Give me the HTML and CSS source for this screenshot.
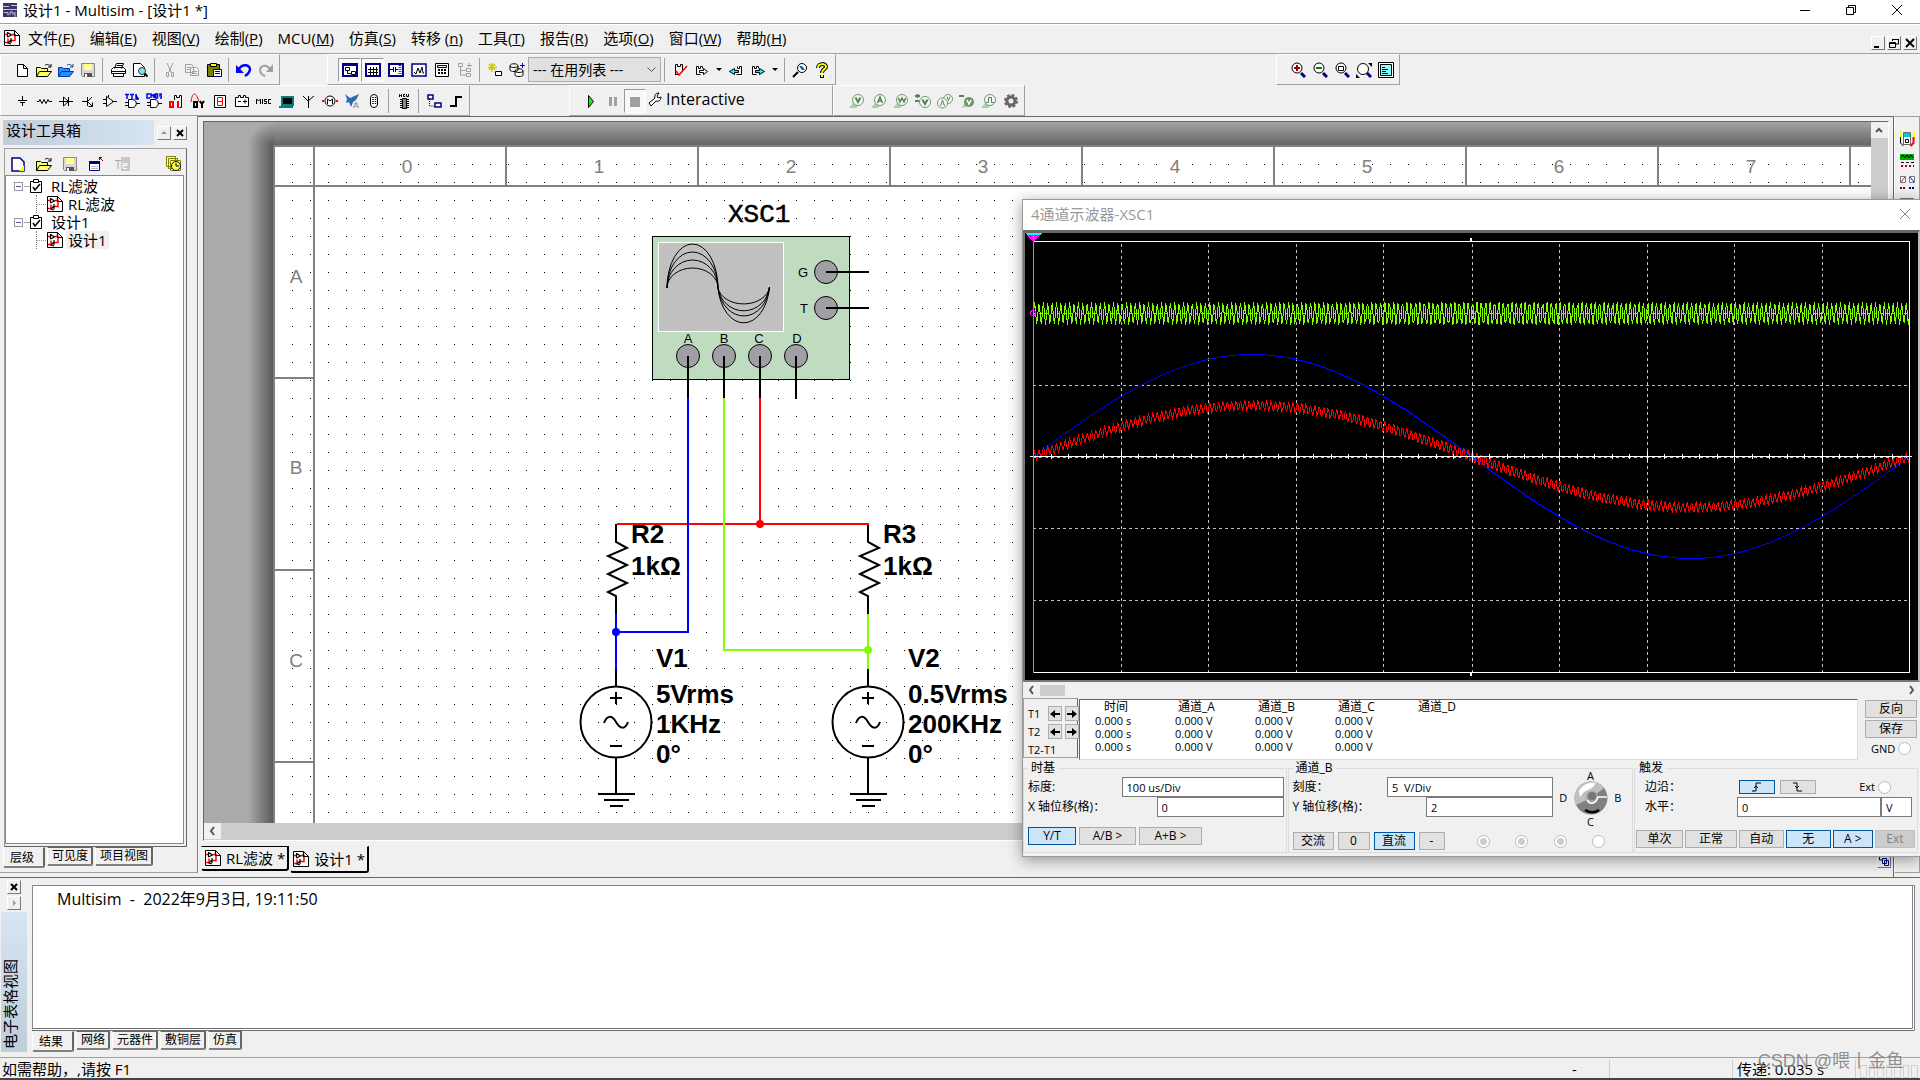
FILE: index.html
```html
<!DOCTYPE html>
<html lang="zh-CN">
<head>
    <meta charset="UTF-8">
    <meta name="viewport" content="width=device-width, initial-scale=1.0">
    <title>设计1 - Multisim - [设计1 *]</title>
    <link rel="stylesheet" href="styles.css">
</head>
<body>
    <svg class="sprite" aria-hidden="true">
        <symbol id="i-app" viewBox="0 0 16 16"><path fill="#3a3468" d="M1 1h14v14H1z"/><path stroke="#c8c4e8" fill="none" d="M1 4.5h6M9 3.5h6M1 7.5h14M2 10.5h4v3M8 13v-3h3v3M13 10v5"/></symbol>
        <symbol id="i-doc" viewBox="0 0 16 16"><path fill="#fff" stroke="#000" d="M.5.5h10l5 5v10H.5z"/><path fill="none" stroke="#f00" stroke-width="1.5" d="M1 4.5h2M1 12.5h3v-4M8 4.5h3v6H7"/><path fill="none" stroke="#000" stroke-width="1.2" d="M10.5.5v5h5M3.500 2v5M3.500 2.500l4 2.500-4 2M7 8v5M7 10l-3 3 3 1"/></symbol>
        <symbol id="i-new" viewBox="0 0 16 16"><path fill="#fff" stroke="#000" d="M3.5 2.5h6l4 4v8h-10zM9.5 2.5v4h4"/></symbol>
        <symbol id="i-open" viewBox="0 0 16 16"><path fill="#ff6" stroke="#000" d="M.5 14.5v-9h4l1 1h6v3M.5 14.5l3-5h12l-4 5z"/><path fill="none" stroke="#000" d="M9 3.5c2-2 4-1 5.5 1M15 2v3h-3"/></symbol>
        <symbol id="i-sample" viewBox="0 0 16 16"><path fill="#2a8cff" stroke="#003a9c" d="M.5 14.5v-9h4l1 1h6v3M.5 14.5l3-5h12l-4 5z"/><path fill="none" stroke="#003a9c" d="M9 3.5c2-2 4-1 5.5 1M15 2v3h-3"/></symbol>
        <symbol id="i-save" viewBox="0 0 16 16"><path fill="#d8d8d8" stroke="#888" d="M1.5 1.5h13v13h-12l-1-1z"/><path fill="#ffff8c" d="M4 2h8v6H4z"/><path fill="#555" d="M4 11h8v4H4z"/><path fill="#fff" d="M5 12h2v3H5z"/></symbol>
        <symbol id="i-print" viewBox="0 0 16 16"><path fill="#fff" stroke="#000" d="M4.5 6.5l2-5h7l-2 5M1.5 7.5l2-2h10l2 2v4h-14zM3.5 11.5h10v3h-10z"/><path stroke="#000" d="M2 9.5h13M7 3.5h5"/></symbol>
        <symbol id="i-preview" viewBox="0 0 16 16"><path fill="#fff" stroke="#000" d="M1.5 1.5h7l4 4v9h-11z"/><circle cx="10" cy="9" r="3.5" fill="#7fe6e6" stroke="#333"/><path stroke="#000" stroke-width="2" d="M12.5 11.5l3 3"/></symbol>
        <symbol id="i-cut" viewBox="0 0 16 16"><path fill="none" stroke="#a0a0a0" d="M5 1l4 9M11 1L7 10M4.5 10.5h2v4h-2zM9.5 10.5h2v4h-2z"/></symbol>
        <symbol id="i-copy" viewBox="0 0 16 16"><path fill="#f0f0f0" stroke="#a0a0a0" d="M1.5 2.5h6l2 2v6h-8zM6.5 5.5h6l2 2v6h-8zM8 9.5h5M8 11.5h5M3 5.5h3M3 7.5h3"/></symbol>
        <symbol id="i-paste" viewBox="0 0 16 16"><path fill="#808000" stroke="#000" d="M1.5 2.5h12v12h-12z"/><path fill="#ff0" stroke="#000" d="M4.5 1.5h6v3h-6z"/><path fill="#fff" stroke="#000080" d="M7.5 7.5h8v7h-8zM9 9.5h5M9 11.5h5"/></symbol>
        <symbol id="i-undo" viewBox="0 0 16 16"><path fill="none" stroke="#00f" stroke-width="2.5" d="M3 7c3-5 10-5 11 0 0 3-2 5-5 7"/><path fill="#00f" d="M0 3v8h8z"/></symbol>
        <symbol id="i-redo" viewBox="0 0 16 16"><path fill="none" stroke="#a0a0a0" stroke-width="2" d="M12 7C9 2 3 3 2 8c0 3 2 5 5 6"/><path fill="#a0a0a0" d="M15 2v8H8z"/></symbol>
        <symbol id="i-toolbox" viewBox="0 0 16 16"><path fill="#fff" stroke="#000080" stroke-width="2" d="M1 2h14v12H1z"/><path fill="#000080" d="M1 1h14v3H1z"/><path fill="none" stroke="#000" d="M3.5 5.5h4v3h-4zM5.5 8.5v3h4M9.5 9.5h4v3h-4z"/></symbol>
        <symbol id="i-grid" viewBox="0 0 16 16"><path fill="#fff" stroke="#000080" stroke-width="2" d="M1 2h14v12H1z"/><path stroke="#000" d="M3 7.5h10M3 10.5h10M5.5 5v8M8.5 5v8M11.5 5v8"/></symbol>
        <symbol id="i-parts" viewBox="0 0 16 16"><path fill="#fff" stroke="#000080" stroke-width="2" d="M1 2h14v12H1z"/><path stroke="#000" d="M2 7.5h3M5.5 5v5M7.5 5v5M8 7.5h2"/><path stroke="#f00" stroke-width="3" stroke-dasharray="1 1" d="M12 3v10"/></symbol>
        <symbol id="i-graph" viewBox="0 0 16 16"><path fill="#fff" stroke="#000080" stroke-width="1.5" d="M1 2h14v12H1z"/><path fill="none" stroke="#000" d="M3 10l2 2 2-6 2 5 2-6 1 6h1"/></symbol>
        <symbol id="i-calc" viewBox="0 0 16 16"><path fill="#fff" stroke="#000" d="M1.5 1.5h13v13h-13zM3.5 3.5h9v2h-9z"/><path stroke="#000" stroke-width="2" stroke-dasharray="2 1" d="M4 8h8M4 11h8"/></symbol>
        <symbol id="i-tree" viewBox="0 0 16 16"><path fill="none" stroke="#a0a0a0" d="M1.5 1.5h4v3h-4zM9.5 6.5h4v3h-4zM9.5 11.5h4v3h-4zM3.5 5v8h6M3.5 8.5h6M12 1v4M10 3.5h5"/></symbol>
        <symbol id="i-create" viewBox="0 0 16 16"><path stroke="#cc0" stroke-width="1.5" d="M5 1v9M1 5.5h9M2 2l6 6M8 2L2 8"/><path fill="#fff" stroke="#000" d="M8.5 9.5h6v4h-6z"/></symbol>
        <symbol id="i-db" viewBox="0 0 16 16"><path fill="#fff" stroke="#000" d="M1 4c0-3 8-3 8 0v4c0 2-8 2-8 0zM6 9c0-3 8-3 8 0v4c0 2-8 2-8 0zM1 4c0 2 8 2 8 0M6 9c0 2 8 2 8 0"/><path stroke="#00a" d="M13.5 1v5M11 3.5h5"/></symbol>
        <symbol id="i-erc" viewBox="0 0 16 16"><path fill="none" stroke="#000" d="M3.5 12.5v-10h2v2h3v-2h2v7M3 12.5h3"/><path fill="none" stroke="#f00" stroke-width="1.5" d="M4 9l3 4 8-9"/></symbol>
        <symbol id="i-fwd" viewBox="0 0 16 16"><path fill="#fff" stroke="#000" d="M2.5 12.5v-8h2v2h2v-2h2v2M5.5 8.5h4v-2l4 3-4 3v-2h-4zM2.5 12.5h4"/></symbol>
        <symbol id="i-back" viewBox="0 0 16 16"><path fill="#fff" stroke="#000" d="M8.5 12.5h5v-8h-2v2h-2v-2"/><path fill="#0ff" stroke="#000" d="M10.5 8.5h-4v-2l-5 3 5 3v-2h4z"/></symbol>
        <symbol id="i-fwd2" viewBox="0 0 16 16"><path fill="#fff" stroke="#000" d="M2.5 12.5v-8h2v2h2v-2h2v2M2.5 12.5h4"/><path fill="#0ff" stroke="#000" d="M5.5 8.5h4v-2l5 3-5 3v-2h-4z"/></symbol>
        <symbol id="i-find" viewBox="0 0 16 16"><circle cx="10" cy="6" r="4.5" fill="#fff" stroke="#000"/><path stroke="#000" stroke-width="2" d="M6 10l-5 5"/><path fill="#06a" d="M7 4h3l3 4h-3z"/></symbol>
        <symbol id="i-help" viewBox="0 0 16 16"><path fill="none" stroke="#000" stroke-width="4" d="M4 6c0-5 8-5 8-1 0 2-4 2-4 6M8 13v3"/><path fill="none" stroke="#ff0" stroke-width="2" d="M4 6c0-5 8-5 8-1 0 2-4 2-4 6M8 13v2"/></symbol>
        <symbol id="i-zoomin" viewBox="0 0 16 16"><circle cx="7" cy="6" r="5" fill="#fff" stroke="#000"/><path stroke="#000080" stroke-width="3" d="M11 11l4 4"/><path stroke="#a00000" stroke-width="2" d="M4 6h6M7 3v6"/></symbol>
        <symbol id="i-zoomout" viewBox="0 0 16 16"><circle cx="7" cy="6" r="5" fill="#fff" stroke="#000"/><path stroke="#000080" stroke-width="3" d="M11 11l4 4"/><path stroke="#008000" stroke-width="2" d="M4 6h6"/></symbol>
        <symbol id="i-zoomarea" viewBox="0 0 16 16"><circle cx="7" cy="6" r="5" fill="#fff" stroke="#000"/><path stroke="#000080" stroke-width="3" d="M11 11l4 4"/><path fill="none" stroke="#000" d="M4.5 4.5h5v4h-5z"/></symbol>
        <symbol id="i-zoomfit" viewBox="0 0 16 16"><circle cx="7" cy="7" r="5.5" fill="#fff" stroke="#000"/><path stroke="#000080" stroke-width="3" d="M11 11l4 4"/><path d="M12 1h4v4zM0 12v4h4z"/></symbol>
        <symbol id="i-full" viewBox="0 0 16 16"><path fill="#fff" stroke="#000" d="M.5.5h15v15H.5z"/><path fill="#8ff" stroke="#000" d="M2.5 2.5h11v11h-11z"/><path stroke="#000" d="M4 5.5h3M4 7.5h6M4 9.5h4M4 11.5h6"/></symbol>

        <symbol id="i-source" viewBox="0 0 16 16"><path stroke="#000" d="M8.5 3v4M4 7.5h9M6 9.5h5M8.5 10v3"/></symbol>
        <symbol id="i-res" viewBox="0 0 16 16"><path fill="none" stroke="#000" d="M1 8.5h2l1-2 2 4 2-4 2 4 2-4 1 2h3"/></symbol>
        <symbol id="i-diode" viewBox="0 0 16 16"><path fill="#fff" stroke="#000" d="M1 8.5h14M5.5 4v9l5-4.5zM10.5 4v9"/></symbol>
        <symbol id="i-bjt" viewBox="0 0 16 16"><path fill="none" stroke="#000" d="M2 8.5h5M7.5 4v9M8 8l4-4M8 9l4 4M12.5 9.5v4h-4"/></symbol>
        <symbol id="i-opamp" viewBox="0 0 16 16"><path fill="#fff" stroke="#000" d="M1 6.5h3M1 10.5h3M10 8.5h5M4.5 3.5v10l7-5zM6.5 2v2"/></symbol>
        <symbol id="i-ttl" viewBox="0 0 16 16"><path stroke="#00f" stroke-width="1.5" d="M1 1.5h4M3 2v4M6 1.5h4M8 2v4M12 1v5h3"/><path fill="#fff" stroke="#000" d="M4.5 6.5h4c5 0 5 8 0 8h-4zM1 9.5h3M1 12.5h3M12 10.5h4"/></symbol>
        <symbol id="i-cmos" viewBox="0 0 16 16"><path fill="none" stroke="#00f" stroke-width="1.5" d="M4 1H1v4h3M5 5V1l2 2 1-2v4M9.5 1h2v4h-2zM16 1h-2v2h2v2h-2"/><path fill="#fff" stroke="#000" d="M4.5 6.5h4c5 0 5 8 0 8h-4zM1 9.5h3M1 12.5h3M12 10.5h4"/></symbol>
        <symbol id="i-digital" viewBox="0 0 16 16"><path fill="none" stroke="#000" d="M6.5 7V2.5h2v2h3v-2h2v12h-2"/><path fill="none" stroke="#f00" stroke-width="2" d="M2 9h3v5H2zM10 8v7"/></symbol>
        <symbol id="i-mixed" viewBox="0 0 16 16"><path fill="none" stroke="#f00" d="M1 9c1-10 5-10 7-3s5 3 6 2"/><path fill="none" stroke="#000" stroke-width="2" d="M4 9h3v5H4zM10 8l2 3v4M14 8l-2 3"/></symbol>
        <symbol id="i-ind" viewBox="0 0 16 16"><path fill="#fff" stroke="#000" d="M2.5 2.5h11v12h-11z"/><path fill="none" stroke="#f00" d="M5.5 4.5h5v8h-5zM5 8.5h6"/></symbol>
        <symbol id="i-power" viewBox="0 0 16 16"><path fill="#fff" stroke="#000" d="M1.5 4.5h3v-2h2v2h3v-2h2v2h3v9h-13zM4 8.5h3M9 8.5h4M11 6.5v4"/></symbol>
        <symbol id="i-misc" viewBox="0 0 16 16"><path fill="none" stroke="#000" d="M.5 11V6l2 2 2-2v5M6.5 6v5M11 6.5H8.5v2h2v2H8M15 6.5h-2.5v4H15"/></symbol>
        <symbol id="i-periph" viewBox="0 0 16 16"><path fill="#000" stroke="#008080" stroke-width="2" d="M4 4h11v8H4z"/><path stroke="#008080" stroke-width="2" d="M1 14h14"/></symbol>
        <symbol id="i-rf" viewBox="0 0 16 16"><path fill="none" stroke="#000" d="M8.5 15V3M3 3l5 5 6-5"/></symbol>
        <symbol id="i-motor" viewBox="0 0 16 16"><path stroke="#f00" stroke-width="2" d="M0 8h2M14 8h2"/><circle cx="8" cy="8" r="5" fill="#fff" stroke="#000"/><path fill="none" stroke="#000" d="M5.5 11V6L8 8l2.5-2v5"/></symbol>
        <symbol id="i-ni" viewBox="0 0 16 16"><path fill="#2a6ab0" d="M1 1l5 4 9-4-3 6-3 2-2 5-2-5-3 1 1-4z"/><path fill="none" stroke="#888" d="M9 14h2v-4h2v4h2"/></symbol>
        <symbol id="i-conn" viewBox="0 0 16 16"><rect x="4.5" y="1.5" width="7" height="13" rx="3.5" fill="#fff" stroke="#000"/><path stroke="#000" stroke-width="1.5" stroke-dasharray="1 1" d="M7 4v8M9.5 4v8"/></symbol>
        <symbol id="i-mcu" viewBox="0 0 16 16"><path fill="none" stroke="#000" d="M3.500 4V1.500l1 1 1-1V4M9 1.500H7.500v2H9M10.500 1v2.500h2V1"/><path stroke="#000" stroke-dasharray="1 1" stroke-width="9" d="M8.500 6v9"/><path fill="#888" stroke="#000" d="M6.500 5.500h4v10h-4z"/></symbol>
        <symbol id="i-hier" viewBox="0 0 16 16"><path fill="#fff" stroke="#000080" stroke-width="1.5" d="M2 2h5v4H2zM9 10h6v4H9z"/><path fill="none" stroke="#000" stroke-dasharray="1 1" d="M3.5 6v7h5"/></symbol>
        <symbol id="i-bus" viewBox="0 0 16 16"><path fill="none" stroke="#000" stroke-width="2" d="M2 13h6V4h6"/></symbol>
        <symbol id="i-play" viewBox="0 0 16 16"><path fill="#0f0" stroke="#000" d="M5.5 2.5v12l5-6z"/></symbol>
        <symbol id="i-pause" viewBox="0 0 16 16"><path fill="#a0a0a0" d="M4 4h3v9H4zM9 4h3v9H9z"/></symbol>
        <symbol id="i-stop" viewBox="0 0 16 16"><path fill="#a0a0a0" d="M3 4h10v10H3z"/></symbol>
        <symbol id="i-wrench" viewBox="0 0 16 16"><path fill="#fff" stroke="#000" d="M2 12l6-5c-1-3 1-5 4-5l-2 3 1 2 3-1c0 3-2 5-5 4l-5 5z"/></symbol>
        <symbol id="i-probe" viewBox="0 0 16 16"><path fill="#a8cfa8" d="M0 15l5-6 4 4-2 2z"/><circle cx="9" cy="7" r="5.5" fill="#f6faf6" stroke="#6f976f"/></symbol>
        <symbol id="i-pv" viewBox="0 0 16 16"><use href="#i-probe"/><path fill="none" stroke="#557f55" stroke-width="2" d="M6.5 4.5L9 9l2.5-4.5"/></symbol>
        <symbol id="i-pa" viewBox="0 0 16 16"><use href="#i-probe"/><path fill="none" stroke="#557f55" stroke-width="1.5" d="M6.5 10L9 4l2.5 6M7 8h4"/></symbol>
        <symbol id="i-pw" viewBox="0 0 16 16"><use href="#i-probe"/><path fill="none" stroke="#557f55" stroke-width="1.5" d="M5.5 5L7 9l2-4 2 4 1.500-4"/></symbol>
        <symbol id="i-pvv" viewBox="0 0 16 16"><circle cx="10" cy="9" r="5.5" fill="#f6faf6" stroke="#6f976f"/><path fill="none" stroke="#557f55" stroke-width="2" d="M7.500 6.500L10 11l2.500-4.500M0 3h5M2.500 1v4M0 8h4"/></symbol>
        <symbol id="i-pav" viewBox="0 0 16 16"><circle cx="11" cy="6" r="4.5" fill="#f6faf6" stroke="#6f976f"/><circle cx="5.5" cy="10" r="5" fill="#f6faf6" stroke="#6f976f"/><path fill="none" stroke="#557f55" d="M3.5 13l2-6 2 6M10 3.5l1.5 4 1.5-4"/></symbol>
        <symbol id="i-pref" viewBox="0 0 16 16"><path fill="#a8cfa8" d="M3 15l3-6 4 4z"/><circle cx="10" cy="9" r="5" fill="#6f976f"/><path fill="none" stroke="#fff" stroke-width="1.5" d="M8 7l2 4 2-4"/><path fill="#557f55" d="M0 2h5v2H0z"/></symbol>
        <symbol id="i-pd" viewBox="0 0 16 16"><use href="#i-probe"/><path fill="none" stroke="#557f55" d="M5 9.5h2.5v-5h3v5H13"/></symbol>
        <symbol id="i-gear" viewBox="0 0 16 16"><circle cx="8" cy="8" r="4" fill="none" stroke="#666" stroke-width="3"/><circle cx="8" cy="8" r="6" fill="none" stroke="#666" stroke-width="2" stroke-dasharray="2.7 2"/></symbol>
        <symbol id="i-newblue" viewBox="0 0 16 16"><path fill="#fff" stroke="#000080" stroke-width="1.5" d="M2 2h8l4 4v9H2z"/><path fill="#ff0" d="M14 9v6H9z"/></symbol>
        <symbol id="i-close" viewBox="0 0 16 16"><path fill="#fff" stroke="#000080" d="M1.5 5.5h10v9h-10z"/><path fill="#000080" d="M1 5h11v3H1z"/><path stroke="#bbb" d="M3 10.500h7M3 12.500h7"/><path fill="none" stroke="#800000" d="M15 5l-4-4M11.500 4V1.500H14"/></symbol>
        <symbol id="i-te" viewBox="0 0 16 16"><path fill="#c8c8c8" d="M7 1h9v14H7z"/><path fill="none" stroke="#a8a8a8" d="M1 4.5h6M4 5v8"/><path fill="none" stroke="#fff" d="M9 9.5h4v-2H9v5h4"/></symbol>
        <symbol id="i-clock" viewBox="0 0 16 16"><path fill="#ff8" stroke="#808000" d="M.5.5h9v10h-9zM2.5 2.5h9v10h-9zM4.5 4.5h10v10h-10z"/><circle cx="10" cy="10" r="4.5" fill="#ff3" stroke="#000080"/><path fill="none" stroke="#000" d="M10 7v3h3"/></symbol>
        <symbol id="i-check" viewBox="0 0 14 14"><path fill="#fff" stroke="#000" d="M1.5 2.5h11v11h-11z"/><path fill="#fff" stroke="#000" d="M4.5.5h5v3h-5z"/><path fill="none" stroke="#000" stroke-width="1.5" d="M4 8l2 3 5-6"/></symbol>
        <symbol id="i-meter" viewBox="0 0 16 16"><path fill="#ff0" d="M1 0h2v6H1zM14 0h2v6h-2z"/><path fill="#fff" stroke="#666" d="M4.5 1.5h7v12h-7z"/><path fill="#0cc" d="M5 2h6v4H5z"/><path fill="none" stroke="#000" d="M1.5 6v6l3 3M6.5 8.5h3v3h-3z"/><path fill="none" stroke="#f00" stroke-width="2" d="M14.5 6v6l-3 3"/></symbol>
        <symbol id="i-gen" viewBox="0 0 16 16"><path fill="#0a0" d="M1 1h14v6H1z"/><path fill="none" stroke="#000" d="M2 4l2-2 2 3 2-3 2 3 2-3 2 3M2 9.5h3M7 9.5h3M12 9.5h3"/><path stroke="#a00" stroke-width="2" stroke-dasharray="2 2" d="M2 13h13"/></symbol>
        <symbol id="i-watt" viewBox="0 0 16 16"><path fill="#fff" stroke="#777" d="M1.5 1.5h5v6h-5zM10.5 1.5h5v6h-5z"/><path stroke="#f00" d="M2 7l4-5"/><path stroke="#00f" d="M11 2l4 5"/><path stroke="#800" stroke-width="2" stroke-dasharray="2 1" d="M1 13h6"/><path stroke="#008" stroke-width="2" stroke-dasharray="2 1" d="M10 13h6"/></symbol>
        <symbol id="i-scope" viewBox="0 0 16 16"><path fill="#fff" stroke="#777" d="M1.5 1.5h13v12h-13z"/><path fill="none" stroke="#00f" d="M2 6l2-3 2 3 2-3 2 3 2-3"/></symbol>
    </svg>

    <header class="titlebar">
        <svg class="icon"><use href="#i-app"/></svg>
        <span class="title">设计1 - Multisim - [设计1 *]</span>
        <div class="window-buttons">
            <button aria-label="最小化"><svg viewBox="0 0 12 12"><path d="M1 6.5h10"/></svg></button>
            <button aria-label="还原"><svg viewBox="0 0 12 12"><path d="M1.5 3.5h7v7h-7zM3.5 3V1.5h7v7H9"/></svg></button>
            <button aria-label="关闭"><svg viewBox="0 0 12 12"><path d="M1 1l10 10M11 1L1 11"/></svg></button>
        </div>
    </header>

    <nav class="menubar">
        <svg class="icon"><use href="#i-doc"/></svg>
        <a href="#">文件(<u>F</u>)</a>
        <a href="#">编辑(<u>E</u>)</a>
        <a href="#">视图(<u>V</u>)</a>
        <a href="#">绘制(<u>P</u>)</a>
        <a href="#">MCU(<u>M</u>)</a>
        <a href="#">仿真(<u>S</u>)</a>
        <a href="#">转移 (<u>n</u>)</a>
        <a href="#">工具(<u>T</u>)</a>
        <a href="#">报告(<u>R</u>)</a>
        <a href="#">选项(<u>O</u>)</a>
        <a href="#">窗口(<u>W</u>)</a>
        <a href="#">帮助(<u>H</u>)</a>
        <div class="mdi-buttons">
            <button class="mini" aria-label="最小化文档"><svg viewBox="0 0 10 10"><path d="M1 9h5"/></svg></button>
            <button class="mini" aria-label="还原文档"><svg viewBox="0 0 10 10"><path class="thin" d="M3 1.5h6M3.5 1v2M9.5 1v5H7M.5 4.5h6v5h-6zM0 5.5h7"/></svg></button>
            <button class="mini" aria-label="关闭文档"><svg viewBox="0 0 10 10"><path d="M1 1l8 8M9 1L1 9"/></svg></button>
        </div>
    </nav>

    <div class="toolbars">
        <div class="toolbar">
            <button class="tool" aria-label="新建"><svg class="icon"><use href="#i-new"/></svg></button>
            <button class="tool" aria-label="打开"><svg class="icon"><use href="#i-open"/></svg></button>
            <button class="tool" aria-label="打开样例"><svg class="icon"><use href="#i-sample"/></svg></button>
            <button class="tool" aria-label="保存"><svg class="icon"><use href="#i-save"/></svg></button>
            <span class="sep"></span>
            <button class="tool" aria-label="打印"><svg class="icon"><use href="#i-print"/></svg></button>
            <button class="tool" aria-label="打印预览"><svg class="icon"><use href="#i-preview"/></svg></button>
            <span class="sep"></span>
            <button class="tool" aria-label="剪切"><svg class="icon"><use href="#i-cut"/></svg></button>
            <button class="tool" aria-label="复制"><svg class="icon"><use href="#i-copy"/></svg></button>
            <button class="tool" aria-label="粘贴"><svg class="icon"><use href="#i-paste"/></svg></button>
            <span class="sep"></span>
            <button class="tool" aria-label="撤销"><svg class="icon"><use href="#i-undo"/></svg></button>
            <button class="tool" aria-label="重做"><svg class="icon"><use href="#i-redo"/></svg></button>
        </div>
        <div class="toolbar main-tools">
            <button class="tool wide pressed" aria-label="设计工具箱"><svg class="icon"><use href="#i-toolbox"/></svg></button>
            <button class="tool wide pressed" aria-label="电子表格"><svg class="icon"><use href="#i-grid"/></svg></button>
            <button class="tool wide" aria-label="元件"><svg class="icon"><use href="#i-parts"/></svg></button>
            <button class="tool wide" aria-label="图示仪"><svg class="icon"><use href="#i-graph"/></svg></button>
            <button class="tool wide" aria-label="后处理器"><svg class="icon"><use href="#i-calc"/></svg></button>
            <button class="tool wide" aria-label="父电路图"><svg class="icon"><use href="#i-tree"/></svg></button>
            <span class="sep"></span>
            <button class="tool" aria-label="元器件向导"><svg class="icon"><use href="#i-create"/></svg></button>
            <button class="tool" aria-label="数据库管理器"><svg class="icon"><use href="#i-db"/></svg></button>
            <select class="in-use" aria-label="在用列表"><option>--- 在用列表 ---</option></select>
            <span class="sep"></span>
            <button class="tool" aria-label="电气法则查验"><svg class="icon"><use href="#i-erc"/></svg></button>
            <button class="tool" aria-label="转移"><svg class="icon"><use href="#i-fwd"/></svg></button>
            <button class="drop" aria-label="更多转移"></button>
            <button class="tool" aria-label="反向注解"><svg class="icon"><use href="#i-back"/></svg></button>
            <button class="tool" aria-label="正向注解"><svg class="icon"><use href="#i-fwd2"/></svg></button>
            <button class="drop" aria-label="更多注解"></button>
            <span class="sep"></span>
            <button class="tool" aria-label="查找范例"><svg class="icon"><use href="#i-find"/></svg></button>
            <button class="tool" aria-label="帮助"><svg class="icon"><use href="#i-help"/></svg></button>
        </div>
        <div class="toolbar zoom-tools">
            <button class="tool" aria-label="放大"><svg class="icon"><use href="#i-zoomin"/></svg></button>
            <button class="tool" aria-label="缩小"><svg class="icon"><use href="#i-zoomout"/></svg></button>
            <button class="tool" aria-label="缩放区域"><svg class="icon"><use href="#i-zoomarea"/></svg></button>
            <button class="tool" aria-label="缩放页面"><svg class="icon"><use href="#i-zoomfit"/></svg></button>
            <button class="tool" aria-label="全屏"><svg class="icon"><use href="#i-full"/></svg></button>
        </div>
    </div>

    <div class="toolbars">
        <div class="toolbar">
            <button class="tool" aria-label="源"><svg class="icon"><use href="#i-source"/></svg></button>
            <button class="tool" aria-label="基本"><svg class="icon"><use href="#i-res"/></svg></button>
            <button class="tool" aria-label="二极管"><svg class="icon"><use href="#i-diode"/></svg></button>
            <button class="tool" aria-label="晶体管"><svg class="icon"><use href="#i-bjt"/></svg></button>
            <button class="tool" aria-label="模拟"><svg class="icon"><use href="#i-opamp"/></svg></button>
            <button class="tool" aria-label="TTL"><svg class="icon"><use href="#i-ttl"/></svg></button>
            <button class="tool" aria-label="CMOS"><svg class="icon"><use href="#i-cmos"/></svg></button>
            <button class="tool" aria-label="其他数字"><svg class="icon"><use href="#i-digital"/></svg></button>
            <button class="tool" aria-label="混合"><svg class="icon"><use href="#i-mixed"/></svg></button>
            <button class="tool" aria-label="指示器"><svg class="icon"><use href="#i-ind"/></svg></button>
            <button class="tool" aria-label="功率元件"><svg class="icon"><use href="#i-power"/></svg></button>
            <button class="tool" aria-label="其他"><svg class="icon"><use href="#i-misc"/></svg></button>
            <button class="tool" aria-label="外设"><svg class="icon"><use href="#i-periph"/></svg></button>
            <button class="tool" aria-label="射频"><svg class="icon"><use href="#i-rf"/></svg></button>
            <button class="tool" aria-label="机电"><svg class="icon"><use href="#i-motor"/></svg></button>
            <button class="tool" aria-label="NI元件"><svg class="icon"><use href="#i-ni"/></svg></button>
            <button class="tool" aria-label="连接器"><svg class="icon"><use href="#i-conn"/></svg></button>
            <span class="sep"></span>
            <button class="tool" aria-label="MCU"><svg class="icon"><use href="#i-mcu"/></svg></button>
            <span class="sep"></span>
            <button class="tool" aria-label="层次块"><svg class="icon"><use href="#i-hier"/></svg></button>
            <button class="tool" aria-label="总线"><svg class="icon"><use href="#i-bus"/></svg></button>
        </div>
        <div class="toolbar sim-tools">
            <button class="tool" aria-label="运行"><svg class="icon"><use href="#i-play"/></svg></button>
            <button class="tool" aria-label="暂停"><svg class="icon"><use href="#i-pause"/></svg></button>
            <button class="tool pressed" aria-label="停止"><svg class="icon"><use href="#i-stop"/></svg></button>
            <button class="interactive"><svg class="icon"><use href="#i-wrench"/></svg>Interactive</button>
        </div>
        <div class="toolbar probe-tools">
            <button class="tool" aria-label="电压探针"><svg class="icon"><use href="#i-pv"/></svg></button>
            <button class="tool" aria-label="电流探针"><svg class="icon"><use href="#i-pa"/></svg></button>
            <button class="tool" aria-label="功率探针"><svg class="icon"><use href="#i-pw"/></svg></button>
            <button class="tool" aria-label="差分探针"><svg class="icon"><use href="#i-pvv"/></svg></button>
            <button class="tool" aria-label="电压电流探针"><svg class="icon"><use href="#i-pav"/></svg></button>
            <button class="tool" aria-label="参考探针"><svg class="icon"><use href="#i-pref"/></svg></button>
            <button class="tool" aria-label="数字探针"><svg class="icon"><use href="#i-pd"/></svg></button>
            <button class="tool" aria-label="探针设置"><svg class="icon"><use href="#i-gear"/></svg></button>
        </div>
    </div>

    <main class="workspace">
        <aside class="toolbox">
            <div class="panel-head">
                <h2>设计工具箱</h2>
                <button class="mini" aria-label="折叠"><svg viewBox="0 0 10 10"><path class="dim" d="M2 6h6L5 3z"/></svg></button>
                <button class="mini" aria-label="关闭工具箱"><svg viewBox="0 0 10 10"><path d="M2 2l6 6M8 2L2 8"/></svg></button>
            </div>
            <div class="panel-body">
                <div class="panel-tools">
                    <button aria-label="新建设计"><svg class="icon"><use href="#i-newblue"/></svg></button>
                    <button aria-label="打开设计"><svg class="icon"><use href="#i-open"/></svg></button>
                    <button aria-label="保存设计"><svg class="icon"><use href="#i-save"/></svg></button>
                    <button aria-label="关闭设计"><svg class="icon"><use href="#i-close"/></svg></button>
                    <button aria-label="重命名"><svg class="icon"><use href="#i-te"/></svg></button>
                    <button class="last" aria-label="版本"><svg class="icon"><use href="#i-clock"/></svg></button>
                </div>
                <ul class="tree">
                    <li>
                        <div class="node"><span class="box"></span><svg class="icon"><use href="#i-check"/></svg><span>RL滤波</span></div>
                        <div class="node leaf"><svg class="icon"><use href="#i-doc"/></svg><span>RL滤波</span></div>
                    </li>
                    <li>
                        <div class="node"><span class="box"></span><svg class="icon"><use href="#i-check"/></svg><span>设计1</span></div>
                        <div class="node leaf"><svg class="icon"><use href="#i-doc"/></svg><span class="selected">设计1</span></div>
                    </li>
                </ul>
            </div>
            <div class="tabs">
                <button class="tab active">层级</button>
                <button class="tab">可见度</button>
                <button class="tab">项目视图</button>
            </div>
        </aside>

        <section class="document">
            <div class="view">
                <svg class="sheet" role="img" aria-label="电路图">
                    <defs>
                        <linearGradient id="shade-left"><stop offset="0" stop-color="#aaa"/><stop offset="1" stop-color="#585858"/></linearGradient>
                        <linearGradient id="shade-top" x2="0" y2="1"><stop offset="0" stop-color="#a4a4a4"/><stop offset="1" stop-color="#646464"/></linearGradient>
                        <radialGradient id="shade-corner" cx="1" cy="1" r="1"><stop offset="0" stop-color="#585858"/><stop offset="1" stop-color="#aaa"/></radialGradient>
                        <pattern id="dots" x="292" y="164" width="18" height="18" patternUnits="userSpaceOnUse"><rect width="1" height="1"/></pattern>
                        <g id="resistor"><path d="M0 0v18l11 6-19 8 19 9-19 9 19 9-19 9 8 4v18"/></g>
                        <g id="ac-source">
                            <circle r="35.5" cy="53"/>
                            <path d="M0 0v17M0 89v36M-6 29H6M0 23v12M-6 77H6M-12 54c3-8 8-8 12-1s9 8 12 0M-18 125h37M-12 131h25M-6 137h13"/>
                        </g>
                    </defs>
                    <g transform="translate(-204 -122)">
                        <rect x="248" y="146" width="26" height="100%" fill="url(#shade-left)"/>
                        <rect x="274" y="122" width="100%" height="24" fill="url(#shade-top)"/>
                        <rect x="248" y="122" width="26" height="24" fill="url(#shade-corner)"/>
                        <rect x="274" y="146" width="100%" height="100%" fill="#fff"/>
                        <rect x="276" y="148" width="100%" height="100%" fill="url(#dots)"/>
                        <path class="frame" d="M274 900V146H2000M274 186H2000M314 146V900M274 378H314M274 570H314M274 762H314M506 146v40M698 146v40M890 146v40M1082 146v40M1274 146v40M1466 146v40M1658 146v40M1850 146v40"/>
                        <g class="zone">
                            <text x="407" y="173">0</text><text x="599" y="173">1</text><text x="791" y="173">2</text><text x="983" y="173">3</text>
                            <text x="1175" y="173">4</text><text x="1367" y="173">5</text><text x="1559" y="173">6</text><text x="1751" y="173">7</text>
                            <text x="296" y="283">A</text><text x="296" y="474">B</text><text x="296" y="667">C</text>
                        </g>

                        <g class="instrument">
                            <text class="refdes" x="728" y="222">XSC1</text>
                            <rect x="652.5" y="236.5" width="197" height="143" fill="#c0dcc0" stroke="#000"/>
                            <rect x="658.5" y="242.5" width="125" height="89" fill="#c0c0c0" stroke="#fff"/>
                            <path fill="none" stroke="#000" d="M667 288A25.5 44 0 0 1 718 288A26 41 0 0 0 769.5 287M667 288A25.5 36 0 0 1 718 288A26 33 0 0 0 769.5 287M667 288A25.5 28 0 0 1 718 288A26 27 0 0 0 769.5 287M667 288A25.5 20 0 0 1 718 288A26 19 0 0 0 769.5 287"/>
                            <g fill="#a0a0a4" stroke="#000">
                                <circle cx="688" cy="356" r="11.5"/><circle cx="724" cy="356" r="11.5"/><circle cx="760" cy="356" r="11.5"/><circle cx="796" cy="356" r="11.5"/>
                                <circle cx="826" cy="272" r="11.5"/><circle cx="826" cy="308" r="11.5"/>
                            </g>
                            <g class="pin">
                                <text x="688" y="343">A</text><text x="724" y="343">B</text><text x="759" y="343">C</text><text x="797" y="343">D</text>
                                <text x="803" y="277">G</text><text x="804" y="313">T</text>
                            </g>
                            <path class="lead" d="M688 356v42M724 356v42M760 356v42M796 356v43M826 272h43M826 308h43"/>
                        </g>

                        <g class="lead">
                            <use href="#resistor" x="616" y="524"/>
                            <use href="#resistor" x="868" y="524"/>
                            <use href="#ac-source" x="616" y="669"/>
                            <use href="#ac-source" x="868" y="669"/>
                        </g>
                        <g class="wire">
                            <path stroke="#f00" d="M760 398V524M617 524H869"/>
                            <path stroke="#00f" d="M688 398V632H616M616 614V669"/>
                            <path stroke="#80ff00" d="M724 398V650H868M868 614V669"/>
                        </g>
                        <circle cx="760" cy="524" r="4" fill="#f00"/>
                        <circle cx="616" cy="632" r="4" fill="#00f"/>
                        <circle cx="868" cy="650" r="4" fill="#80ff00"/>

                        <g class="label">
                            <text x="631" y="543">R2</text><text x="631" y="575">1kΩ</text>
                            <text x="883" y="543">R3</text><text x="883" y="575">1kΩ</text>
                            <text x="656" y="667">V1</text><text x="656" y="703">5Vrms</text><text x="656" y="733">1KHz</text><text x="656" y="763">0°</text>
                            <text x="908" y="667">V2</text><text x="908" y="703">0.5Vrms</text><text x="908" y="733">200KHz</text><text x="908" y="763">0°</text>
                        </g>
                    </g>
                </svg>
                <div class="vscroll"><svg viewBox="0 0 17 16"><path d="M5 10l3-3 3 3"/></svg></div>
                <div class="hscroll"><svg viewBox="0 0 17 16"><path d="M10 4L7 8l3 4"/></svg></div>
            </div>
            <div class="doc-tabs">
                <button class="doc-tab"><svg class="icon"><use href="#i-doc"/></svg>RL滤波 *</button>
                <button class="doc-tab active"><svg class="icon"><use href="#i-doc"/></svg>设计1 *</button>
                <button class="mini doc-nav" aria-label="窗口列表"><svg viewBox="0 0 10 10"><path class="blue" d="M.5 0v4H3M3.5 2.5h4v5h-4zM5.5 4.5h4v5h-4z"/></svg></button>
            </div>
        </section>

        <aside class="instruments">
            <button aria-label="万用表"><svg class="icon"><use href="#i-meter"/></svg></button>
            <button aria-label="函数发生器"><svg class="icon"><use href="#i-gen"/></svg></button>
            <button aria-label="瓦特计"><svg class="icon"><use href="#i-watt"/></svg></button>
            <button aria-label="示波器"><svg class="icon"><use href="#i-scope"/></svg></button>
        </aside>
    </main>

    <section class="spreadsheet">
        <div class="side">
            <button class="mini" aria-label="关闭视图"><svg viewBox="0 0 10 10"><path d="M2 2l6 6M8 2L2 8"/></svg></button>
            <button class="mini" aria-label="展开"><svg viewBox="0 0 10 10"><path class="dim" d="M4 2v6l3-3z"/></svg></button>
            <h2>电子表格视图</h2>
        </div>
        <div class="results">
            <div class="log"><pre>Multisim  -  2022年9月3日, 19:11:50</pre></div>
            <div class="tabs">
                <button class="tab active">结果</button>
                <button class="tab">网络</button>
                <button class="tab">元器件</button>
                <button class="tab">敷铜层</button>
                <button class="tab">仿真</button>
            </div>
        </div>
    </section>

    <footer class="statusbar">
        <span class="hint">如需帮助，,请按 F1</span>
        <span class="cell">-</span>
        <span class="cell"></span>
        <span class="cell">传递: 0.035 s</span>
        <span class="cell blocks"><i></i><i></i><i></i><i></i><i></i><i></i><i></i></span>
        <span class="watermark">CSDN @喂丨金鱼</span>
    </footer>

    <section class="scope">
        <div class="scope-title">
            <h2>4通道示波器-XSC1</h2>
            <button aria-label="关闭示波器"><svg viewBox="0 0 12 12"><path d="M1 1l10 10M11 1L1 11"/></svg></button>
        </div>
        <div class="screen">
            <svg id="plot" viewBox="0 0 891 447" preserveAspectRatio="none" role="img" aria-label="波形">
                <g id="grid"></g>
                <polyline id="wave-a" stroke="#00f"/>
                <polyline id="wave-b" stroke="#80ff00"/>
                <polyline id="wave-c" stroke="#f00"/>
                <path id="axis" stroke="#fff"/>
                <path stroke="#0f0" d="M8.5 8V440"/>
                <path fill="#f0f" d="M1 2h15L8.5 9z"/><path fill="#0ff" d="M0 0h17l-2 2H2z"/><path fill="#ff0" d="M8 3h1v1H8zM8 5h1v1H8z"/>
                <circle cx="8" cy="80" r="2.5" fill="none" stroke="#f0f"/>
            </svg>
        </div>
        <div class="scope-scroll">
            <svg viewBox="0 0 17 16"><path d="M10 4L7 8l3 4"/></svg>
            <span class="thumb"></span>
            <svg viewBox="0 0 17 16"><path d="M7 4l3 4-3 4"/></svg>
        </div>
        <div class="readout">
            <div class="cursors">
                <span>T1</span>
                <button aria-label="T1左移"><svg viewBox="0 0 10 10"><path d="M0 5l5-4v3h5v2H5v3z"/></svg></button>
                <button aria-label="T1右移"><svg viewBox="0 0 10 10"><path d="M10 5L5 1v3H0v2h5v3z"/></svg></button>
                <span>T2</span>
                <button aria-label="T2左移"><svg viewBox="0 0 10 10"><path d="M0 5l5-4v3h5v2H5v3z"/></svg></button>
                <button aria-label="T2右移"><svg viewBox="0 0 10 10"><path d="M10 5L5 1v3H0v2h5v3z"/></svg></button>
                <span class="diff">T2-T1</span>
            </div>
            <div class="values">
                <table>
                    <tr><th class="time">时间</th><th>通道_A</th><th>通道_B</th><th>通道_C</th><th>通道_D</th></tr>
                    <tr><td>0.000 s</td><td>0.000 V</td><td>0.000 V</td><td>0.000 V</td><td></td></tr>
                    <tr><td>0.000 s</td><td>0.000 V</td><td>0.000 V</td><td>0.000 V</td><td></td></tr>
                    <tr><td>0.000 s</td><td>0.000 V</td><td>0.000 V</td><td>0.000 V</td><td></td></tr>
                </table>
            </div>
            <div class="actions">
                <button class="btn">反向</button>
                <button class="btn">保存</button>
                <label>GND <input type="radio" name="gnd"></label>
            </div>
        </div>
        <div class="controls">
            <fieldset class="timebase">
                <legend>时基</legend>
                <div class="field"><label for="scale">标度:</label><input id="scale" class="w162" type="text" value="100 us/Div"></div>
                <div class="field"><label for="xpos">X 轴位移(格)：</label><input id="xpos" class="w127" type="text" value="0"></div>
                <div class="row">
                    <button class="btn on w48">Y/T</button>
                    <button class="btn w57">A/B &gt;</button>
                    <button class="btn w63">A+B &gt;</button>
                </div>
            </fieldset>
            <fieldset class="channel">
                <legend>通道_B</legend>
                <div class="split">
                    <div class="fields">
                        <div class="field"><label for="yscale">刻度：</label><input id="yscale" class="w166" type="text" value="5  V/Div"></div>
                        <div class="field"><label for="ypos">Y 轴位移(格)：</label><input id="ypos" class="w127" type="text" value="2"></div>
                    </div>
                    <div class="knob">
                        <span class="a">A</span><span class="d">D</span>
                        <svg viewBox="0 0 34 34"><circle cx="17" cy="17" r="16.5" fill="#808080"/><path fill="#c0c0c0" d="M17 .5A16.5 16.5 0 0 0 2 24L17 17l13-10A16.5 16.5 0 0 0 17 .5z"/><path fill="#fff" d="M5 10C9 3 15 1 22 2l-4 5-8 4-4 5z"/><circle cx="18" cy="16" r="6" fill="#a0a0a0"/><circle cx="18" cy="15" r="4" fill="#777"/><path fill="none" stroke="#fff" stroke-width="1.5" d="M13 19c3 5 9 4 11-3h9"/><path fill="none" stroke="#000" stroke-width="2.5" d="M11 29c5 3 10 3 14 0"/></svg>
                        <span class="b">B</span><span class="c">C</span>
                    </div>
                </div>
                <div class="row coupling">
                    <button class="btn w41">交流</button>
                    <button class="btn w32">0</button>
                    <button class="btn on w41">直流</button>
                    <button class="btn w26">-</button>
                    <div class="radios">
                        <input type="radio" name="ch1" aria-label="通道 A" checked disabled>
                        <input type="radio" name="ch2" aria-label="通道 B" checked disabled>
                        <input type="radio" name="ch3" aria-label="通道 C" checked disabled>
                        <input type="radio" name="ch4" aria-label="通道 D">
                    </div>
                </div>
            </fieldset>
            <fieldset class="trigger">
                <legend>触发</legend>
                <div class="field">
                    <span class="cap">边沿：</span>
                    <button class="btn on edge" aria-label="上升沿"><svg viewBox="0 0 12 10"><path d="M1 9h4V1h5M3 6l2-2 2 2"/></svg></button>
                    <button class="btn edge" aria-label="下降沿"><svg viewBox="0 0 12 10"><path d="M1 1h4v8h5M3 4l2 2 2-2"/></svg></button>
                    <label class="ext">Ext <input type="radio" name="ext"></label>
                </div>
                <div class="field level"><label for="level">水平：</label><input id="level" class="w144" type="text" value="0"><input class="w31" type="text" value="V" aria-label="单位"></div>
                <div class="row modes">
                    <button class="btn w48">单次</button>
                    <button class="btn w53">正常</button>
                    <button class="btn w46">自动</button>
                    <button class="btn on w46">无</button>
                    <button class="btn on w41">A &gt;</button>
                    <button class="btn w41" disabled>Ext</button>
                </div>
            </fieldset>
        </div>
    </section>
    <script src="script.js"></script>
</body>
</html>
```
FILE: styles.css
```css
* {
    box-sizing: border-box;
}

body {
    display: flex;
    flex-direction: column;
    height: 100vh;
    margin: 0;
    overflow: hidden;
    position: relative;
    background-color: #f0f0f0;
    border-bottom: 2px solid #444;
    color: #000;
    font-family: "Open Sans", "Noto Sans CJK SC", sans-serif;
    font-size: 15px;
    line-height: 18px;
}

button, input, select {
    font: inherit;
    color: inherit;
    margin: 0;
    padding: 0;
    border: none;
    background: none;
    border-radius: 0;
}

h2 {
    margin: 0;
    font-size: 15px;
    font-weight: normal;
}

.sprite {
    position: absolute;
    width: 0;
    height: 0;
}

.icon {
    display: block;
    width: 16px;
    height: 16px;
    flex: none;
}

/* title and menu */
.titlebar {
    display: flex;
    align-items: center;
    height: 24px;
    flex: none;
    padding: 0 0 3px 2px;
    gap: 5px;
    background-color: #fff;
    border-bottom: 1px solid #a0a0a0;
}

.window-buttons {
    display: flex;
    margin-left: auto;
}

.window-buttons button {
    width: 46px;
    height: 20px;
    display: flex;
    justify-content: center;
    align-items: center;
}

.window-buttons svg,
.scope-title svg {
    width: 12px;
    height: 12px;
    fill: none;
    stroke: #000;
}

.menubar {
    display: flex;
    align-items: center;
    height: 30px;
    flex: none;
    padding: 0 3px 2px 4px;
    border-top: 1px solid #fff;
    border-bottom: 1px solid #a0a0a0;
}

.menubar a {
    color: #000;
    text-decoration: none;
    margin-right: 15px;
}

.menubar .icon {
    margin-right: 8px;
}

.mdi-buttons {
    display: flex;
    gap: 2px;
    margin: 10px 0 0 auto;
}

.mini {
    width: 14px;
    height: 14px;
    display: flex;
    justify-content: center;
    align-items: center;
    border: 1px solid;
    border-color: #fff #777 #777 #fff;
    flex: none;
}

.mini svg {
    width: 10px;
    height: 10px;
    fill: none;
    stroke: #000;
    stroke-width: 2;
}

.mini .thin {
    stroke-width: 1;
}

.mini .dim {
    fill: #999;
    stroke: none;
}

.mini .blue {
    stroke: #000080;
    stroke-width: 1;
}

/* toolbars */
.toolbars {
    display: flex;
    height: 31px;
    flex: none;
}

.toolbar {
    display: flex;
    align-items: center;
    padding: 0 2px 0 10px;
    border: 1px solid;
    border-color: #fff #a0a0a0 #a0a0a0 #fff;
}

.tool {
    width: 22px;
    height: 24px;
    display: flex;
    justify-content: center;
    align-items: center;
}

.tool.wide {
    width: 23px;
}

.tool.pressed {
    background-color: #f8f8f8;
    border: 1px solid;
    border-color: #999 #fff #fff #999;
}

.sep {
    width: 1px;
    height: 24px;
    margin: 0 4px 0 3px;
    background-color: #a0a0a0;
}

.main-tools {
    margin-left: 47px;
}

.in-use {
    appearance: none;
    width: 133px;
    height: 25px;
    padding-left: 4px;
    border: 1px solid #adadad;
    background: #e1e1e1 url("data:image/svg+xml,%3Csvg xmlns='http://www.w3.org/2000/svg' width='9' height='6'%3E%3Cpath d='M.5.5l4 4 4-4' fill='none' stroke='%23555'/%3E%3C/svg%3E") no-repeat right 4px center;
    font-size: 14px;
}

.drop {
    width: 12px;
    height: 24px;
    display: flex;
    justify-content: center;
    align-items: center;
}

.drop::after {
    content: "";
    border: 3px solid transparent;
    border-top-color: #000;
    border-bottom: none;
}

.zoom-tools {
    margin-left: 440px;
}

.sim-tools {
    width: 264px;
    margin-left: 99px;
}

.interactive {
    display: flex;
    align-items: center;
    gap: 3px;
    padding: 0 0 4px 1px;
    font-size: 16px;
}

.probe-tools {
    padding-left: 12px;
}

/* design toolbox */
.workspace {
    display: flex;
    flex: 1;
    min-height: 0;
}

.toolbox {
    width: 198px;
    flex: none;
    display: flex;
    flex-direction: column;
    padding: 4px 10px 4px 3px;
    border-right: 1px solid #808080;
    border-bottom: 1px solid #a0a0a0;
    margin-bottom: 4px;
}

.panel-head {
    display: flex;
    align-items: center;
    gap: 2px;
    height: 25px;
}

.panel-head h2 {
    flex: 1;
    height: 25px;
    padding: 1px 0 0 3px;
    margin-right: 1px;
    background: linear-gradient(to right, #bfcddb, #d7e5f3);
}

.panel-body {
    flex: 1;
    display: flex;
    flex-direction: column;
    margin: 3px 0 0 1px;
    border: 1px solid;
    border-color: #a0a0a0 #666 #666 #a0a0a0;
    padding-right: 2px;
}

.panel-tools {
    display: flex;
    align-items: center;
    height: 26px;
    padding: 3px 2px 0 5px;
    gap: 10px;
}

.panel-tools .last {
    margin-left: auto;
}

.tree {
    flex: 1;
    margin: 0 0 2px;
    padding: 1px 0 0 8px;
    list-style: none;
    background-color: #fff;
    border: 1px solid #828790;
}

.tree li {
    background: linear-gradient(#aaa, #aaa) 10px 9px / 6px 1px no-repeat;
}

.node {
    display: flex;
    align-items: center;
    height: 18px;
    gap: 6px;
}

.node .icon {
    width: 14px;
    height: 14px;
}

.node span:last-child {
    padding: 0 2px;
}

.box {
    width: 9px;
    height: 9px;
    border: 1px solid #999;
    background: linear-gradient(#4a5a9a, #4a5a9a) center / 5px 1px no-repeat #fff;
}

.leaf {
    margin-left: 22px;
    padding-left: 10px;
    gap: 3px;
    background: repeating-linear-gradient(to right, #999 0, #999 1px, #fff 1px, #fff 2px) 0 9px / 10px 1px no-repeat;
    border-left: 1px dotted #777;
}

.leaf .icon {
    width: 16px;
    height: 16px;
}

.selected {
    background-color: #f0f0f0;
}

.tabs {
    display: flex;
    align-items: flex-start;
    gap: 2px;
    font-size: 12px;
    line-height: 16px;
}

.tab {
    height: 19px;
    padding: 0 3px 0 4px;
    border: 1px solid;
    border-color: #666 #666 #808080 #fff;
    border-bottom-width: 2px;
    border-right-width: 2px;
    border-radius: 0 0 2px 2px;
}

.tab.active {
    height: 21px;
    padding: 2px 9px 0 6px;
    border-top-color: transparent;
}

/* schematic */
.document {
    flex: 1;
    min-width: 0;
    display: flex;
    flex-direction: column;
    border-top: 1px solid #666;
    border-right: 1px solid #666;
}

.view {
    flex: 1;
    min-height: 0;
    display: grid;
    grid-template-columns: 1fr 17px;
    grid-template-rows: 1fr 17px;
    margin: 4px 4px 0 5px;
    border-left: 1px solid #666;
    border-top: 1px solid #666;
    border-right: 1px solid #fff;
    border-bottom: 1px solid #fff;
}

.sheet {
    display: block;
    width: 100%;
    height: 100%;
    min-height: 0;
    overflow: hidden;
    background-color: #aaa;
}

.frame {
    fill: none;
    stroke: #808080;
    stroke-width: 2;
}

.zone {
    fill: #808080;
    font-family: "Liberation Sans", sans-serif;
    font-size: 19px;
    text-anchor: middle;
}

.refdes {
    font-family: "Liberation Mono", monospace;
    font-size: 26px;
    stroke: #000;
    stroke-width: 0.5;
}

.pin {
    font-family: "Liberation Sans", sans-serif;
    font-size: 13px;
    text-anchor: middle;
}

.lead {
    fill: none;
    stroke: #000;
    stroke-width: 2;
}

.wire {
    fill: none;
    stroke-width: 2;
}

.label {
    font-family: "Liberation Sans", sans-serif;
    font-size: 26px;
    font-weight: bold;
}

.vscroll,
.hscroll {
    background-color: #cdcdcd;
}

.hscroll svg,
.vscroll svg,
.scope-scroll svg {
    display: block;
    width: 17px;
    height: 16px;
    fill: none;
    stroke: #555;
    stroke-width: 2;
    background-color: #f0f0f0;
}

.doc-tabs {
    display: flex;
    align-items: flex-start;
    height: 36px;
    padding: 5px 2px 0 3px;
    gap: 1px;
}

.doc-tab {
    display: flex;
    align-items: center;
    gap: 5px;
    height: 25px;
    padding: 0 2px 0 3px;
    border: 1px solid #000;
    border-left-color: #f0f0f0;
    border-right-width: 2px;
    border-bottom-width: 2px;
    border-radius: 0 0 3px 3px;
}

.doc-tab.active {
    height: 27px;
    padding-left: 2px;
    border-top-color: #f0f0f0;
}

.doc-nav {
    margin: 8px 0 0 auto;
}

.instruments {
    width: 26px;
    flex: none;
    display: flex;
    flex-direction: column;
    align-items: center;
    gap: 6px;
    padding: 14px 1px 0 0;
    border: 1px solid;
    border-color: #a0a0a0 #a0a0a0 #a0a0a0 #fff;
    margin-bottom: 4px;
}

/* spreadsheet view */
.spreadsheet {
    display: flex;
    height: 180px;
    flex: none;
    border-top: 1px solid #666;
    padding: 2px 5px 5px 1px;
}

.side {
    width: 26px;
    display: flex;
    flex-direction: column;
    align-items: center;
    gap: 2px;
}

.side h2 {
    flex: 1;
    width: 100%;
    padding-top: 3px;
    writing-mode: vertical-rl;
    text-orientation: sideways;
    transform: rotate(180deg);
    background: linear-gradient(to top, #d7e5f3, #bfcddb);
}

.results {
    flex: 1;
    margin: 5px 0 0 5px;
}

.log {
    height: 146px;
    padding: 4px 24px;
    background-color: #fff;
    border: 1px solid #828790;
    border-right: 3px double #828790;
    border-bottom: 3px double #707070;
    font-size: 16px;
}

.log pre {
    margin: 0;
    font: inherit;
}

/* status bar */
.statusbar {
    display: flex;
    height: 21px;
    flex: none;
    position: relative;
    border-top: 1px solid #a0a0a0;
    padding-top: 2px;
}

.hint {
    flex: 1;
    padding-left: 2px;
}

.cell {
    width: 123px;
    padding-left: 4px;
    border-right: 1px solid #ccc;
}

.cell:nth-child(2) {
    width: 42px;
}

.blocks {
    display: flex;
    gap: 2px;
    width: 64px;
    padding: 5px 2px 0 4px;
    border-right: none;
}

.blocks i {
    flex: 1;
    border: 1px solid #d4d0c8;
}

.watermark {
    position: absolute;
    right: 16px;
    bottom: 3px;
    color: #777;
    font-family: "Liberation Sans", "Noto Sans CJK SC", sans-serif;
    font-size: 18px;
    line-height: 28px;
    opacity: 0.8;
    text-shadow: 0 0 2px #fff;
}

/* oscilloscope window */
.scope {
    position: absolute;
    left: 1022px;
    right: 0;
    top: 199px;
    background-color: #f0f0f0;
    border: 1px solid #999;
    border-right: none;
    box-shadow: 0 3px 14px rgba(0, 0, 0, 0.4);
    font-size: 12px;
    line-height: 12px;
}

.scope-title {
    display: flex;
    justify-content: space-between;
    align-items: center;
    height: 30px;
    padding: 0 9px 2px 8px;
    background-color: #fff;
    color: #999;
}

.scope-title svg {
    display: block;
    stroke: #888;
}

.screen {
    border: 2px solid #777;
    border-top: 3px solid #666;
    border-right-color: #bbb;
    background-color: #000;
    padding-right: 1px;
}

.screen svg {
    display: block;
    width: 100%;
    height: 447px;
    fill: none;
    shape-rendering: crispEdges;
}

#grid {
    stroke: #c0c0c0;
    stroke-dasharray: 3 3;
}

.scope-scroll {
    display: flex;
    align-items: center;
    height: 16px;
}

.scope-scroll .thumb {
    width: 25px;
    height: 11px;
    margin-right: auto;
    background-color: #cdcdcd;
}

.readout {
    display: flex;
    height: 64px;
}

.cursors {
    width: 55px;
    height: 60px;
    display: grid;
    grid-template-columns: 17px 14px 14px;
    grid-template-rows: 15px 15px 15px;
    gap: 3px;
    align-items: center;
    padding: 7px 0 0 4px;
    border: 1px solid;
    border-color: #a0a0a0 #666 #a0a0a0 #a0a0a0;
    font-size: 11px;
}

.cursors button {
    height: 15px;
    border: 1px solid #adadad;
    background-color: #e1e1e1;
}

.cursors svg {
    display: block;
    width: 10px;
    height: 10px;
    margin: 0 auto;
}

.cursors .diff {
    grid-column: 1 / 4;
}

.values {
    flex: 1;
    background-color: #fff;
    border: 1px solid;
    border-color: #666 #ddd #ddd #666;
    margin: 1px 7px 2px 1px;
}

.values table {
    table-layout: fixed;
    width: 400px;
    border-collapse: collapse;
}

.values th,
.values td {
    height: 13px;
    padding: 0 0 0 15px;
    font-size: 11px;
    font-weight: normal;
    text-align: left;
    white-space: nowrap;
}

.values th {
    height: 14px;
    padding: 0 0 0 18px;
    font-size: 12px;
}

.values .time {
    padding-left: 24px;
}

.actions {
    width: 52px;
    margin-right: 3px;
    padding-top: 2px;
    display: flex;
    flex-direction: column;
    gap: 2px;
}

.actions label,
.ext {
    display: flex;
    align-items: center;
    gap: 3px;
    font-size: 11px;
}

.actions label {
    padding: 2px 0 0 6px;
}

.btn {
    height: 18px;
    border: 1px solid #adadad;
    background-color: #e1e1e1;
    text-align: center;
    white-space: nowrap;
}

.btn.on {
    border-color: #00549b;
    background-color: #cce4f7;
}

.btn:disabled {
    border-color: #bfbfbf;
    background-color: #ccc;
    color: #838383;
}

.scope input[type="radio"] {
    appearance: none;
    width: 13px;
    height: 13px;
    flex: none;
    border: 1px solid #bbb;
    border-radius: 50%;
    background-color: #fff;
}

.scope input[type="radio"]:checked {
    background: radial-gradient(circle, #ccc 3px, #fff 4px);
}

.controls {
    display: flex;
    gap: 1px;
}

.controls fieldset {
    min-width: 0;
    height: 91px;
    margin: 0 0 3px;
    padding: 3px 2px 0 4px;
    border: 1px solid #dcdcdc;
}

.controls legend {
    padding: 0 3px;
    line-height: 12px;
}

.timebase {
    flex: 262 1 0;
}

.channel {
    flex: 346 1 0;
}

.controls .trigger {
    flex: 286 1 0;
    margin-right: 2px;
    padding-left: 1px;
}

.field {
    display: flex;
    align-items: center;
    height: 20px;
}

.field label,
.field .cap {
    margin-right: auto;
    white-space: nowrap;
}

.field input[type="text"] {
    height: 20px;
    padding: 0 4px;
    border: 1px solid #7a7a7a;
    background-color: #fff;
    font-size: 11px;
}

.row {
    display: flex;
    gap: 3px;
    margin-top: 10px;
}

.coupling {
    gap: 4px;
    margin-top: 15px;
}

.modes {
    gap: 2px;
    margin-top: 13px;
}

.radios {
    flex: 1;
    display: flex;
    justify-content: space-between;
    align-items: center;
    padding: 0 25px 0 28px;
}

.split {
    display: flex;
    height: 40px;
}

.fields {
    flex: 1;
}

.knob {
    width: 77px;
    height: 60px;
    display: grid;
    grid-template: "x a y" 11px "d k b" 34px "z c w" 13px / 1fr 34px 1fr;
    align-items: center;
    justify-items: center;
    margin-top: -7px;
    padding-right: 2px;
    font-size: 11px;
}

.knob svg {
    grid-area: k;
    width: 34px;
    height: 34px;
}

.knob .a { grid-area: a; }
.knob .b { grid-area: b; }
.knob .c { grid-area: c; }
.knob .d { grid-area: d; }

.trigger .cap,
.trigger .level label {
    padding-left: 9px;
}

.edge {
    width: 36px;
    height: 14px;
    margin-right: 5px;
}

.edge svg {
    display: block;
    width: 12px;
    height: 10px;
    margin: 0 auto;
    fill: none;
    stroke: #000;
}

.field .ext {
    margin: 0 24px 0 38px;
}

.level {
    padding-right: 3px;
}

.w26 { width: 26px; }
.w31 { width: 31px; }
.w32 { width: 32px; }
.w41 { width: 41px; }
.w46 { width: 46px; }
.w48 { width: 48px; }
.w53 { width: 53px; }
.w57 { width: 57px; }
.w63 { width: 63px; }
.w127 { width: 127px; }
.w144 { width: 144px; }
.w162 { width: 162px; }
.w166 { width: 166px; }
```
FILE: script.js
```javascript
document.addEventListener('DOMContentLoaded', () => {
    const left = 8;
    const width = 875;
    const top = 8;
    const height = 431;
    const mid = 223;

    // dashed divisions, 10 across and 6 down
    let lines = '';
    for (let i = 1; i < 10; i++) {
        const x = Math.round(left + width * i / 10) + 0.5;
        lines += `<path d="M${x} ${top + 3}V${top + height}"/>`;
    }
    for (let i = 1; i < 6; i++) {
        const y = Math.round(top + height * i / 6) + 0.5;
        lines += `<path d="M${left} ${y}H${left + width}"/>`;
    }
    document.getElementById('grid').innerHTML = lines;

    // frame and centre axis with ticks
    let axis = `M${left} ${top + 0.5}H${left + width + 0.5}V${top + height + 0.5}H${left}`;
    axis += `M${left - 3} ${mid + 0.5}H${left + width + 3}`;
    for (let i = 1; i < 50; i++) {
        const x = Math.round(left + width * i / 50) + 0.5;
        const len = i % 5 === 0 ? 5 : 2;
        axis += `M${x} ${mid - len}v${len * 2 + 1}`;
    }
    axis += `M${left + width / 2} ${top - 3}v3M${left + width / 2} ${top + height}v4`;
    document.getElementById('axis').setAttribute('d', axis);

    function trace(id, fn) {
        const points = [];
        for (let x = 0; x <= width; x++) {
            points.push(`${left + x + 0.5},${Math.round(fn(x / width)) + 0.5}`);
        }
        document.getElementById(id).setAttribute('points', points.join(' '));
    }

    const slow = t => Math.sin(2 * Math.PI * t);
    const fast = t => Math.sin(2 * Math.PI * 200 * t);
    trace('wave-a', t => mid - 102 * slow(t));
    trace('wave-b', t => 80 - 11 * fast(t));
    trace('wave-c', t => mid - 51 * slow(t) - 5 * fast(t));
});
```
